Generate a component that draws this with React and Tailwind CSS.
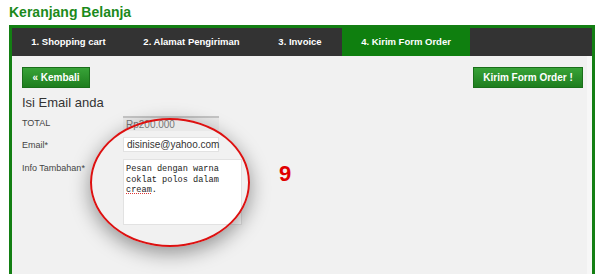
import React from "react";

const tabs = [
  { label: "1. Shopping cart", w: "w-[113px]" },
  { label: "2. Alamat Pengiriman", w: "w-[133px]" },
  { label: "3. Invoice", w: "w-[84px]" },
  { label: "4. Kirim Form Order", w: "w-[128px]", active: true },
];

export default function App() {
  return (
    <div className="relative h-[274px] w-[604px] overflow-hidden bg-white font-['Liberation_Sans',Arial,sans-serif]">
      <h1 className="pl-[9px] pt-[3px] text-[14px] font-bold leading-[18px] text-[#1b8a1b]">
        Keranjang Belanja
      </h1>

      <div className="ml-[9px] mt-[4px] w-[586px] border-[3px] border-b-0 border-[#137f13]">
        <div className="flex h-[28px] bg-[#333333]">
          {tabs.map((t) => (
            <div
              key={t.label}
              className={`${t.w} flex items-center justify-center text-[9.5px] font-bold text-white ${
                t.active ? "bg-[#0f7f0f]" : ""
              }`}
            >
              {t.label}
            </div>
          ))}
        </div>

        <div className="h-[220px] border-r-[5px] border-[#f7f7f7] bg-[#f1f1f1] pl-[10px] pr-[4px] pt-[11px]">
          <div className="flex justify-between">
            <button className="h-[21px] w-[68px] border border-[#1a6f1a] bg-gradient-to-b from-[#38a338] to-[#1e7e1e] text-[10px] font-bold text-white">
              « Kembali
            </button>
            <button className="h-[21px] w-[110px] border border-[#1a6f1a] bg-gradient-to-b from-[#38a338] to-[#1e7e1e] text-[10px] font-bold text-white">
              Kirim Form Order !
            </button>
          </div>

          <h2 className="mt-[7px] text-[13px] leading-[16px] text-[#333]">Isi Email anda</h2>

          <div className="mt-[5px] flex flex-col gap-[6px] text-[9px] text-[#444]">
            <div className="flex items-start">
              <span className="w-[101px] leading-[14px]">TOTAL</span>
              <div className="flex h-[15px] w-[96px] items-center border-t-2 border-[#c4c4c4] bg-[#e9e9e9] pl-[3px] text-[10px] text-[#777]">
                Rp200.000
              </div>
            </div>
            <div className="flex items-start">
              <span className="w-[101px] leading-[16px]">Email*</span>
              <div className="flex h-[15px] w-[96px] items-center border border-[#e2e2e2] bg-white pl-[3px] text-[10px] text-[#333]">
                disinise@yahoo.com
              </div>
            </div>
            <div className="flex items-start">
              <span className="w-[101px] leading-[18px]">Info Tambahan*</span>
              <div className="h-[66px] w-[119px] border border-[#e2e2e2] bg-white px-[2px] pt-[4px] font-['Liberation_Mono','Courier_New',monospace] text-[8.6px] leading-[10.5px] text-[#222]">
                Pesan dengan warna
                <br />
                coklat polos dalam
                <br />
                <span className="underline decoration-[#d33] decoration-dotted">cream</span>.
              </div>
            </div>
          </div>
        </div>
      </div>

      <div className="pointer-events-none absolute left-[90px] top-[118px] h-[129px] w-[160px] rounded-[50%] border-2 border-[#dd1111] shadow-[0_6px_20px_rgba(0,0,0,0.4)]" />

      <div className="absolute left-[279px] top-[161px] text-[22px] font-bold leading-[26px] text-[#e00000]">
        9
      </div>
    </div>
  );
}
